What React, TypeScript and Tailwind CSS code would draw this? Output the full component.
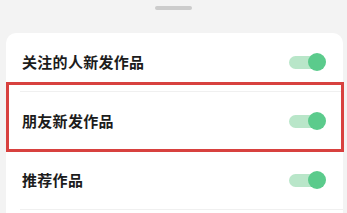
import React from "react";

const rows = ["关注的人新发作品", "朋友新发作品", "推荐作品"];

function Toggle() {
  return (
    <div className="flex items-center">
      <div className="h-[13px] w-[30px] rounded-full bg-[#b9e6c9]" />
      <div className="-ml-[11px] h-[18px] w-[18px] rounded-full bg-[#5bcb8c]" />
    </div>
  );
}

export default function App() {
  return (
    <div
      className="h-[213px] w-[347px] overflow-hidden bg-[#f3f3f3]"
      style={{ fontFamily: '"Noto Sans CJK SC", "Noto Sans", sans-serif' }}
    >
      <div className="mx-auto mt-[6px] h-[4px] w-[37px] rounded-full bg-[#cccccc]" />
      <div className="relative mx-[6px] mt-[23px] w-[337px] rounded-t-[10px] bg-white pb-[10px]">
        {rows.map((label) => (
          <div
            key={label}
            className="ml-[14px] flex h-[59px] items-center justify-between border-b border-[#f0f0f0] pl-[2px] pr-[17px]"
          >
            <span className="text-[15px] font-semibold tracking-[0.3px] text-[#1c1c1c]">{label}</span>
            <Toggle />
          </div>
        ))}
        <div className="pointer-events-none absolute left-0 top-[49px] h-[70px] w-[338px] border-[3px] border-[#d8413f]" />
      </div>
    </div>
  );
}
